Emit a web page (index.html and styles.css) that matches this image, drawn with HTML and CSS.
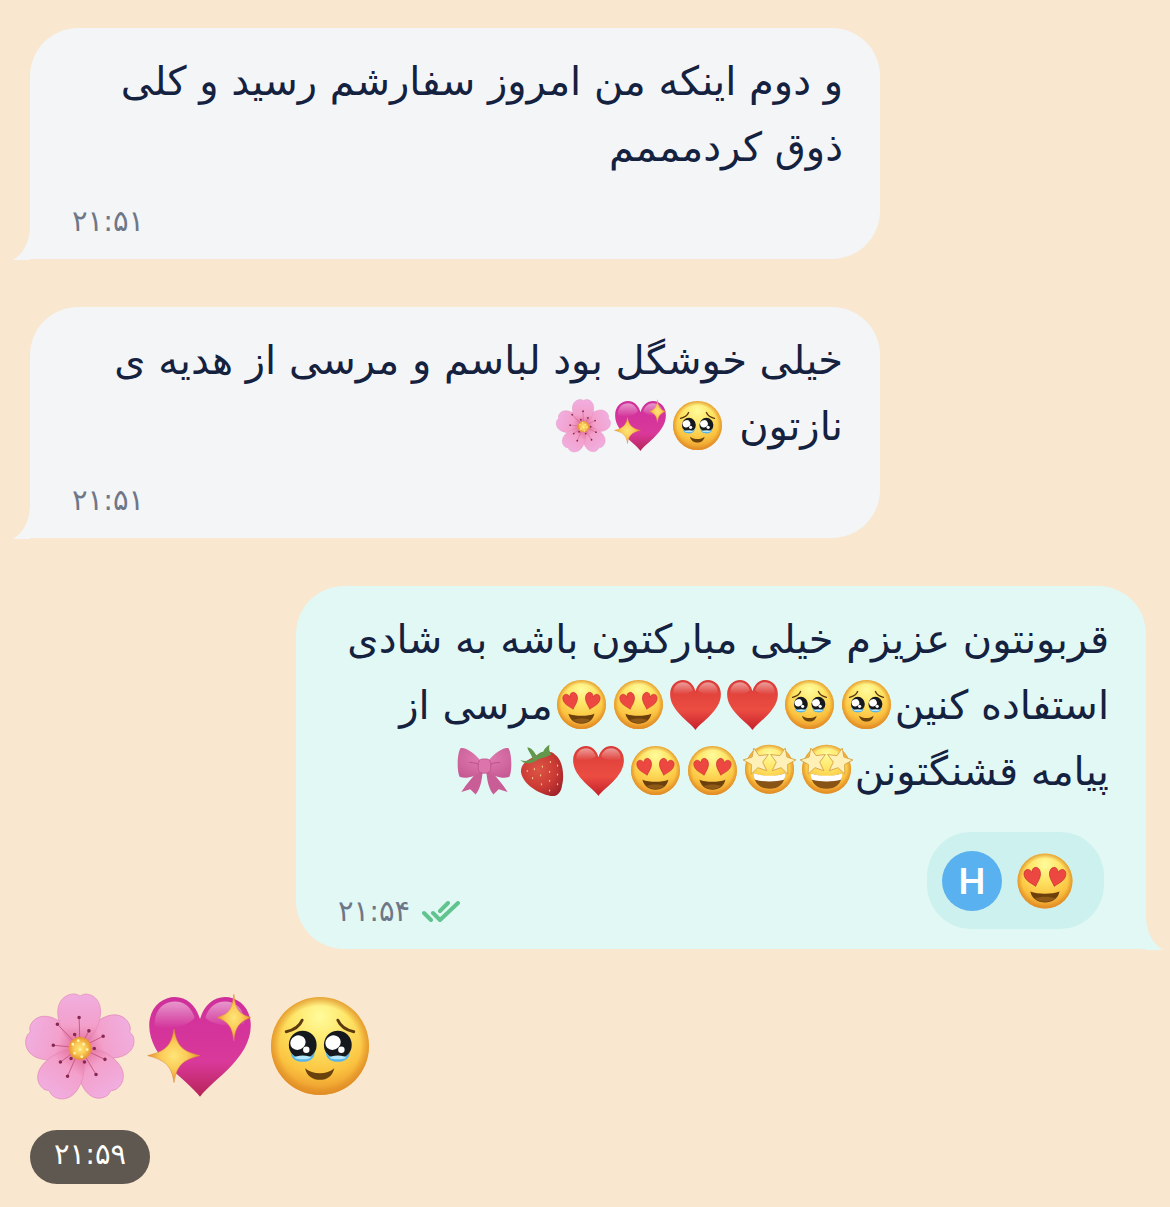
FILE: index.html
```html
<!DOCTYPE html>
<html lang="fa">

<head>
    <meta charset="UTF-8">
    <meta name="viewport" content="width=device-width, initial-scale=1.0">
    <title>گفتگو</title>
    <link rel="stylesheet" href="styles.css">
</head>

<body>
    <!-- Emoji shapes -->
    <svg class="sprite" aria-hidden="true">
        <defs>
            <radialGradient id="skin" cx="0.5" cy="0.2" r="0.82">
                <stop offset="0" stop-color="#fffb9c"/>
                <stop offset="0.35" stop-color="#fee566"/>
                <stop offset="0.7" stop-color="#fbc441"/>
                <stop offset="1" stop-color="#e88f27"/>
            </radialGradient>
            <radialGradient id="rim">
                <stop offset="0.82" stop-color="#dd8a24" stop-opacity="0"/>
                <stop offset="1" stop-color="#dd8a24" stop-opacity="0.75"/>
            </radialGradient>
            <linearGradient id="red" x1="0" y1="0" x2="0" y2="1">
                <stop offset="0" stop-color="#d93a36"/>
                <stop offset="0.6" stop-color="#ec4d42"/>
                <stop offset="1" stop-color="#c4202b"/>
            </linearGradient>
            <linearGradient id="pink" x1="0" y1="0" x2="0" y2="1">
                <stop offset="0" stop-color="#cf2f9b"/>
                <stop offset="0.65" stop-color="#d9399a"/>
                <stop offset="1" stop-color="#b72457"/>
            </linearGradient>
            <linearGradient id="shine" x1="0" y1="0" x2="0" y2="1">
                <stop offset="0" stop-color="#fff" stop-opacity="0.5"/>
                <stop offset="1" stop-color="#fff" stop-opacity="0"/>
            </linearGradient>
            <radialGradient id="gold">
                <stop offset="0" stop-color="#fee578"/>
                <stop offset="0.5" stop-color="#fbcb57"/>
                <stop offset="1" stop-color="#e8932f"/>
            </radialGradient>
            <linearGradient id="petal" x1="0" y1="0" x2="0" y2="1">
                <stop offset="0" stop-color="#f0aee0"/>
                <stop offset="0.55" stop-color="#f3a0cb"/>
                <stop offset="1" stop-color="#dd5c88"/>
            </linearGradient>
            <radialGradient id="berry" cx="0.4" cy="0.4" r="0.7">
                <stop offset="0" stop-color="#dc5546"/>
                <stop offset="0.6" stop-color="#cb3a34"/>
                <stop offset="1" stop-color="#a1242b"/>
            </radialGradient>
            <radialGradient id="ribbon" cx="0.5" cy="0.35" r="0.7">
                <stop offset="0" stop-color="#e27fb2"/>
                <stop offset="1" stop-color="#c75a94"/>
            </radialGradient>

            <path id="heart-shape" d="M32 60.500C25 51 3.500 39 3.500 20.500C3.500 10.500 10.500 4.500 18 4.500C24.500 4.500 30 9.500 32 17C34 9.500 39.500 4.500 46 4.500C53.500 4.500 60.500 10.500 60.500 20.500C60.500 39 39 51 32 60.500Z"/>
            <path id="petal-shape" d="M32 35C25 30 19.500 21 19.500 13C19.500 6 24.500 2.500 29 2.800C30.500 2.800 31.500 4 32.300 3.800C33.200 3.400 34.500 2.600 36 2.900C41 3.500 44 8 43.500 14C43 21 38 30 32 35Z"/>
            <path id="star-shape" d="M0 -15L4 -5.500L14.500 -4.500L6.500 2.500L9 13L0 7.500L-9 13L-6.500 2.500L-14.500 -4.500L-4 -5.500Z"/>
            <g id="face">
                <circle cx="32" cy="32" r="27.500" fill="url(#skin)"/>
                <circle cx="32" cy="32" r="27.500" fill="url(#rim)"/>
            </g>
            <g id="shiny-eye">
                <ellipse rx="7.800" ry="8" fill="#15191d"/>
                <path d="M-6.800 4C-5 7 -2 7.500 0 7.500C2 7.500 5 7 6.800 4C6.500 8.500 3 9.500 0 9.500C-3 9.500 -6.500 8.500 -6.800 4Z" fill="#58b5ea"/>
                <ellipse cy="7" rx="4.500" ry="1" fill="#b5e7fb"/>
                <ellipse cx="-1.900" cy="-2.300" rx="4.400" ry="4" fill="#fff" transform="rotate(-25)"/>
                <circle cx="2" cy="2.700" r="1.800" fill="#fff"/>
            </g>
        </defs>

        <symbol id="tearful" viewBox="0 0 64 64">
            <use href="#face"/>
            <use href="#shiny-eye" x="22.300" y="31.400"/>
            <use href="#shiny-eye" x="42" y="31.400"/>
            <path d="M13 24C17 23.200 20.500 21 22 17.500M51 24C47 23.200 43.500 21 42 17.500" fill="none" stroke="#5d3a0e" stroke-width="1.600" stroke-linecap="round"/>
            <path d="M23.600 44.500C28 48.200 36 48.200 40 44.500C39 49 36 51 32 51C28 51 24.600 49 23.600 44.500Z" fill="#68410d"/>
        </symbol>

        <symbol id="heart-eyes" viewBox="0 0 64 64">
            <use href="#face"/>
            <g fill="#ec4740" stroke="#c42d2c" stroke-width="2">
                <use href="#heart-shape" transform="translate(8.500 20.500) rotate(-15) scale(0.290 0.330)"/>
                <use href="#heart-shape" transform="translate(37.500 15.700) rotate(15) scale(0.290 0.330)"/>
            </g>
            <path d="M17.300 42.500C25 45.500 39 45.500 46.500 42.500C45 50 39 53.500 32 53.500C25 53.500 19 50 17.300 42.500Z" fill="#6b400c"/>
            <path d="M22 49.500C27 47 37 47 42 49.500C37 53.800 27 53.800 22 49.500Z" fill="#8f5a18"/>
        </symbol>

        <symbol id="star-eyes" viewBox="0 0 64 64">
            <use href="#face" y="-1.500"/>
            <path d="M14.500 35C25 39.500 39 39.500 49.500 35C49.500 47 42 52.500 32 52.500C22 52.500 14.500 47 14.500 35Z" fill="#8a5316"/>
            <path d="M14.500 35C25 39 39 39 49.500 35C50 39 49 41 48 42.500C39 45 25 45 16 42.500C15 41 14 39 14.500 35Z" fill="#fff"/>
            <g fill="#fff0b8" stroke="#d9a548" stroke-width="1" stroke-linejoin="round">
                <use href="#star-shape" transform="translate(17.500 21.500) rotate(-12)"/>
                <use href="#star-shape" transform="translate(46.500 21.500) rotate(12)"/>
            </g>
        </symbol>

        <symbol id="red-heart" viewBox="0 0 64 64">
            <use href="#heart-shape" fill="url(#red)"/>
            <path d="M7 19C7 11 12 7 18 7C23 7 27 10 29 16C25 21 10 22 7 19ZM35 16C37 10 41 7 46 7C52 7 57 11 57 19C54 22 39 21 35 16Z" fill="url(#shine)"/>
        </symbol>

        <symbol id="sparkling-heart" viewBox="0 0 64 64">
            <use href="#heart-shape" fill="url(#pink)"/>
            <path d="M6.500 20C6.500 11 12 7 18 7C23 7 27 10 29 16C25 22 10 24 6.500 20ZM35 16C37 10 41 7 46 7C52 7 57 11 57 19C54 22 39 21 35 16Z" fill="url(#shine)"/>
            <g fill="url(#gold)" stroke="#d98a3a" stroke-width="0.300">
                <path d="M17.400 22.500C19 32 22 35 32 37.400C22 40 19 43 17.400 52.500C16 43 12.500 40 2.600 37.400C12.500 35 16 32 17.400 22.500Z"/>
                <path d="M51 3C52 12 54 14 60.500 16C54 18.500 52 21 51 29C50 21 48 18.500 41.500 16C48 14 50 12 51 3Z"/>
            </g>
        </symbol>

        <symbol id="blossom" viewBox="0 0 64 64">
            <g fill="url(#petal)" stroke="#e48abb" stroke-width="0.400">
                <use href="#petal-shape" transform="rotate(72 32 33.300)"/>
                <use href="#petal-shape" transform="rotate(288 32 33.300)"/>
                <use href="#petal-shape" transform="rotate(144 32 33.300)"/>
                <use href="#petal-shape" transform="rotate(216 32 33.300)"/>
                <use href="#petal-shape"/>
            </g>
            <path d="M32 33L31.500 16M32 33L19.300 19.800M32 33L17 31.600M32 33L21 41M32 33L25 49M32 33L41 48M32 33L46 39.500M32 33L45 26.500M32 33L37 23.500M32 33L29 25.500" fill="none" stroke="#c4547e" stroke-width="0.500"/>
            <path d="M31.500 16h0M19.300 19.800h0M17 31.600h0M21 41h0M25 49h0M41 48h0M46 39.500h0M45 26.500h0M37 23.500h0M29 25.500h0M40 33.400h0M34.500 41h0M27 39h0" fill="none" stroke="#84284f" stroke-width="2" stroke-linecap="round"/>
            <circle cx="32" cy="33.300" r="6.400" fill="url(#gold)"/>
            <path d="M28 31h0M31 29h0M34 31h0M36 34h0M32 34h0M29 36h0M33 38h0" fill="none" stroke="#fff5a8" stroke-width="1.600" stroke-linecap="round"/>
        </symbol>

        <symbol id="strawberry" viewBox="0 0 64 64">
            <path d="M25 16C32 10 42 9 47 14C56 20 58 38 55 49C54 57 49 62 42 60.500C28 58 11 47 9 34C8 25 17 19 25 16Z" fill="url(#berry)"/>
            <path d="M8 20C14 23 18 20 22 19C21 14 17 11 16 6C22 7 24 12 27 16C29 12 32 11 34 11C35 7 38 5 41 3C40 8 41 11 43 14C37 17 33 18 29 19C24 23 14 27 8 20Z" fill="#63974b"/>
            <path d="M16 32v1M24 30v1M33 27v1M42 22v1M50 26v1M22 40v1M31 37v1M41 33v1M50 36v1M32 47v1M41 43v1M50 47v1M41 54v1" fill="none" stroke="#f3c47d" stroke-width="1.400" stroke-linecap="round"/>
        </symbol>

        <symbol id="bow" viewBox="0 0 64 64">
            <path d="M26 31C20 38 12 47 6 56L16 53L22 59C28 51 29 42 30 33ZM38 31C44 38 52 47 58 56L48 53L42 59C36 51 35 42 34 33Z" fill="#c95d96"/>
            <path d="M28 21C20 12 10 5 5 7C1 14 1 32 4 39C12 42 22 38 28 33ZM36 21C44 12 54 5 59 7C63 14 63 32 60 39C52 42 42 38 36 33Z" fill="url(#ribbon)"/>
            <path d="M15 23C20 23 24 24 27 26M49 23C44 23 40 24 37 26" fill="none" stroke="#b94c86" stroke-width="1"/>
            <rect x="25" y="19" width="14" height="16" rx="5" fill="#dc75aa" stroke="#b94c86" stroke-width="0.800"/>
        </symbol>

        <symbol id="tail" viewBox="0 0 17 32">
            <path d="M17 0C16 15 10 26 0 32H17Z"/>
        </symbol>
    </svg>

    <main class="chat">
        <article class="bubble received">
            <p class="text">و دوم اینکه من امروز سفارشم رسید و کلی<br>ذوق کردمممم</p>
            <div class="meta">
                <time datetime="21:51">۲۱:۵۱</time>
            </div>
            <svg class="tail"><use href="#tail"/></svg>
        </article>

        <article class="bubble received">
            <p class="text">خیلی خوشگل بود لباسم و مرسی از هدیه ی<br>نازتون <svg class="emoji" role="img" aria-label="🥹"><use href="#tearful"/></svg><svg class="emoji" role="img" aria-label="💖"><use href="#sparkling-heart"/></svg><svg class="emoji" role="img" aria-label="🌸"><use href="#blossom"/></svg></p>
            <div class="meta">
                <time datetime="21:51">۲۱:۵۱</time>
            </div>
            <svg class="tail"><use href="#tail"/></svg>
        </article>

        <article class="bubble sent">
            <p class="text">قربونتون عزیزم خیلی مبارکتون باشه به شادی<br>استفاده کنین<svg class="emoji" role="img" aria-label="🥹"><use href="#tearful"/></svg><svg class="emoji" role="img" aria-label="🥹"><use href="#tearful"/></svg><svg class="emoji" role="img" aria-label="❤️"><use href="#red-heart"/></svg><svg class="emoji" role="img" aria-label="❤️"><use href="#red-heart"/></svg><svg class="emoji" role="img" aria-label="😍"><use href="#heart-eyes"/></svg><svg class="emoji" role="img" aria-label="😍"><use href="#heart-eyes"/></svg>مرسی از<br>پیامه قشنگتونن<svg class="emoji" role="img" aria-label="🤩"><use href="#star-eyes"/></svg><svg class="emoji" role="img" aria-label="🤩"><use href="#star-eyes"/></svg><svg class="emoji" role="img" aria-label="😍"><use href="#heart-eyes"/></svg><svg class="emoji" role="img" aria-label="😍"><use href="#heart-eyes"/></svg><svg class="emoji" role="img" aria-label="❤️"><use href="#red-heart"/></svg><svg class="emoji" role="img" aria-label="🍓"><use href="#strawberry"/></svg><svg class="emoji" role="img" aria-label="🎀"><use href="#bow"/></svg></p>
            <div class="footer">
                <div class="meta">
                    <time datetime="21:54">۲۱:۵۴</time>
                    <svg class="ticks" viewBox="0 0 38 22" role="img" aria-label="خوانده شد">
                        <path d="M2 12L9 19M11 12L18 19L36 2M18 10L26 2"/>
                    </svg>
                </div>
                <button class="reaction" type="button">
                    <span class="avatar">H</span>
                    <svg class="emoji" role="img" aria-label="😍"><use href="#heart-eyes"/></svg>
                </button>
            </div>
            <svg class="tail"><use href="#tail"/></svg>
        </article>

        <article class="sticker">
            <div class="big-emojis">
                <svg class="emoji" role="img" aria-label="🥹"><use href="#tearful"/></svg>
                <svg class="emoji" role="img" aria-label="💖"><use href="#sparkling-heart"/></svg>
                <svg class="emoji" role="img" aria-label="🌸"><use href="#blossom"/></svg>
            </div>
            <time class="time-pill" datetime="21:59">۲۱:۵۹</time>
        </article>
    </main>
</body>

</html>
```
FILE: styles.css
```css
* {
    box-sizing: border-box;
}

body {
    margin: 0;
    background: #f9e7cf;
    color: #14213f;
    font-family: 'DejaVu Sans', sans-serif;
}

.sprite {
    position: absolute;
    width: 0;
    height: 0;
}

.chat {
    display: flex;
    flex-direction: column;
    align-items: flex-start;
    gap: 48px;
    padding: 28px 24px 23px 30px;
}

.bubble {
    position: relative;
    width: 100%;
    max-width: 850px;
    padding: 20px 37px;
    border-radius: 48px;
}

.received {
    background: #f3f5f7;
    border-bottom-left-radius: 0;
}

.sent {
    align-self: flex-end;
    background: #e2f8f5;
    border-bottom-right-radius: 0;
}

.text {
    margin: 0;
    direction: rtl;
    font-size: 40px;
    line-height: 66px;
}

.emoji {
    width: 57px;
    height: 57px;
    vertical-align: -14px;
}

.meta {
    display: flex;
    align-items: center;
    gap: 12px;
    padding: 24px 5px 0;
    color: #6f7787;
    font-size: 29px;
    line-height: 35px;
}

.footer {
    display: flex;
    justify-content: space-between;
    align-items: flex-end;
    padding: 28px 5px 0 0;
}

.ticks {
    width: 38px;
    height: 22px;
    fill: none;
    stroke: #61c48e;
    stroke-width: 4;
    stroke-linecap: round;
    stroke-linejoin: round;
}

.reaction {
    display: flex;
    align-items: center;
    gap: 11px;
    height: 97px;
    padding: 0 27px 0 15px;
    border: none;
    border-radius: 44px;
    background: #cdf1ee;
    cursor: pointer;
}

.reaction .emoji {
    width: 64px;
    height: 64px;
}

.avatar {
    width: 60px;
    border-radius: 50%;
    background: #5ab1ef;
    color: #fff;
    font: 600 36px/60px 'Inter', sans-serif;
    text-align: center;
}

.tail {
    position: absolute;
    bottom: -1px;
    left: -17px;
    width: 17px;
    height: 32px;
    fill: #f3f5f7;
}

.sent .tail {
    left: auto;
    right: -17px;
    fill: #e2f8f5;
    transform: scaleX(-1);
}

.sticker {
    margin-top: -8px;
}

.big-emojis {
    display: flex;
    direction: rtl;
    gap: 6px;
    margin: 0 0 27px -7px;
}

.big-emojis .emoji {
    width: 114px;
    height: 114px;
}

.time-pill {
    display: inline-block;
    padding: 0 24px 6px;
    border-radius: 27px;
    background: #5f5850;
    color: #fff;
    font-size: 29px;
    line-height: 48px;
}
```
